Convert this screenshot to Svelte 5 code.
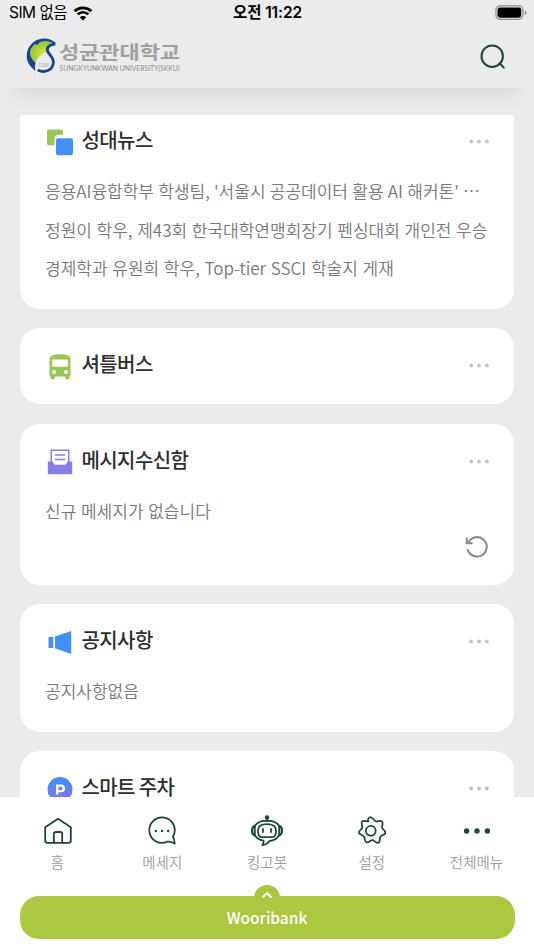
<script>
  const cards = [
    {
      id: 'news',
      title: '성대뉴스',
      lines: [
        "응용AI융합학부 학생팀, '서울시 공공데이터 활용 AI 해커톤' ⋯",
        '정원이 학우, 제43회 한국대학연맹회장기 펜싱대회 개인전 우승',
        '경제학과 유원희 학우, Top-tier SSCI 학술지 게재'
      ]
    },
    { id: 'bus', title: '셔틀버스', lines: [] },
    { id: 'inbox', title: '메시지수신함', lines: ['신규 메세지가 없습니다'], refresh: true },
    { id: 'notice', title: '공지사항', lines: ['공지사항없음'] },
    { id: 'parking', title: '스마트 주차', lines: [] }
  ]

  const tabs = [
    { id: 'home', label: '홈' },
    { id: 'message', label: '메세지' },
    { id: 'bot', label: '킹고봇' },
    { id: 'settings', label: '설정' },
    { id: 'more', label: '전체메뉴' }
  ]
</script>

<div class="app">
  <div class="status">
    <div class="carrier">
      <span>SIM 없음</span>
      <svg width="20" height="15" viewBox="0 0 20 15">
        <path d="M1.600 5.200a12.200 12.200 0 0 1 16.800 0M4.600 8.400a7.800 7.800 0 0 1 10.800 0" fill="none" stroke="#000" stroke-width="2.700" />
        <path d="M10 14.400 6.800 11.200a4.600 4.600 0 0 1 6.400 0z" />
      </svg>
    </div>
    <span class="time">오전 11:22</span>
    <svg class="battery" width="32" height="16" viewBox="0 0 32 16">
      <rect x=".9" y=".9" width="27" height="13.400" rx="4" fill="none" stroke="#8c8c8c" stroke-width="1.200" />
      <rect x="2.500" y="2.500" width="23.800" height="10.200" rx="2.400" />
      <path d="M29.700 5.200q1.800 .8 1.800 2.500t-1.800 2.500z" fill="#8c8c8c" />
    </svg>
  </div>

  <header>
    <svg class="logo" width="170" height="40" viewBox="0 0 170 40">
      <defs>
        <radialGradient id="leaf" gradientUnits="userSpaceOnUse" cx="72" cy="70" r="50">
          <stop offset="0" stop-color="#dde54a" />
          <stop offset=".5" stop-color="#b3d23a" />
          <stop offset="1" stop-color="#86bf3a" />
        </radialGradient>
      </defs>
      <g transform="scale(.3333) translate(-16 -16)">
        <path d="M110 35C84 10 40 18 25 53c-10 25 0 50 23 65-3-8-3-16 0-24-12-14-13-28-8-41 12-18 34-25 70-18z" fill="#17478b" />
        <path d="M33 53c4-8 9-13 15-17l5 6 5-9c15-7 28-6 40 1-13 5-19 14-16 28-16 3-27 14-34 30C33 82 28 67 33 53z" fill="url(#leaf)" />
        <path d="M107 37C86 39 78 50 86 63c7 10 17 17 15 32-3 20-25 31-47 20" fill="none" stroke="#17478b" stroke-width="8.500" />
        <text class="year" x="55" y="105" textLength="32" lengthAdjust="spacingAndGlyphs">1398</text>
      </g>
      <text class="name" x="34" y="21.500" textLength="121" lengthAdjust="spacingAndGlyphs">성균관대학교</text>
      <text class="latin" x="34.500" y="34" textLength="120" lengthAdjust="spacingAndGlyphs">SUNGKYUNKWAN UNIVERSITY(SKKU)</text>
    </svg>
    <svg class="search" width="26" height="26" viewBox="0 0 26 26">
      <circle cx="12.200" cy="12.200" r="10.700" />
      <path d="m19.500 19.300 4.300 4.300" />
    </svg>
  </header>

  <main>
    {#each cards as card}
      <section class="card {card.id}">
        <div class="head">
          <svg class="icon" width="28" height="28" viewBox="0 0 28 28">
            {#if card.id === 'news'}
              <path d="M3 1.500h12q2 0 2 2v3.200h-4.500q-4 0-4 4v6.500H3q-2 0-2-2V3.500q0-2 2-2z" fill="#98c556" />
              <rect x="10" y="10.300" width="17" height="17" rx="2.200" fill="#428ff5" />
            {:else if card.id === 'bus'}
              <path fill-rule="evenodd" fill="#98c556" d="M3.500 7q0-4.800 10.500-4.800T24.500 7v15.500q0 2-1.300 2.500v1.200q0 1-1 1h-2q-1 0-1-1v-1.700H8.800v1.700q0 1-1 1h-2q-1 0-1-1V25q-1.300-.5-1.300-2.500zM6.200 7.400v7.400h15.600V7.400zM8 18a2.100 2.100 0 1 0 0 4.200A2.100 2.100 0 0 0 8 18zM20 18a2.100 2.100 0 1 0 0 4.200 2.100 2.100 0 0 0 0-4.200z" />
            {:else if card.id === 'inbox'}
              <path d="M1.800 14.500h4.500l2.300 3.300h10.800l2.300-3.300h4.500v12.700H1.800z" fill="#857ee9" />
              <path d="M5.200 15.500V3.300h17.600v12.200M8.800 8.100h10.400M8.800 12.500h10.400" fill="none" stroke="#857ee9" stroke-width="1.500" />
            {:else if card.id === 'notice'}
              <path d="M2.500 9h4.800v11H2.500zM9 8.600l16.200-5.600v23L9 20.300z" fill="#428ff5" />
            {:else}
              <defs>
                <linearGradient id="park" x2="0" y2="1">
                  <stop stop-color="#378ff7" />
                  <stop offset="1" stop-color="#8c76e5" />
                </linearGradient>
              </defs>
              <circle cx="14" cy="14.500" r="12.500" fill="url(#park)" />
              <path d="M11.200 19.500v-8.800h4q2.600 0 2.600 2.700t-2.600 2.700h-4" fill="none" stroke="#fff" stroke-width="2.300" />
            {/if}
          </svg>
          <h2>{card.title}</h2>
          <svg class="dots" width="20" height="5" viewBox="0 0 20 5">
            <circle cx="2.200" cy="2.500" r="2" /><circle cx="10" cy="2.500" r="2" /><circle cx="17.800" cy="2.500" r="2" />
          </svg>
        </div>
        {#if card.lines.length}
          <ul>
            {#each card.lines as line}
              <li>{line}</li>
            {/each}
          </ul>
        {/if}
        {#if card.refresh}
          <svg class="refresh" width="24" height="24" viewBox="0 0 24 24">
            <path d="M2.600 14.200a9.700 9.700 0 1 0 1-7.200" />
            <path d="M1.800 2.500v5.700h5.800" />
          </svg>
        {/if}
      </section>
    {/each}
  </main>

  <footer>
    <nav>
      {#each tabs as tab}
        <div class="tab">
          <svg width="34" height="34" viewBox="0 0 34 34">
            {#if tab.id === 'home'}
              <path d="M4.200 13.200 17 4.800l12.800 8.400v13.300q0 2.300-2.300 2.300h-21q-2.300 0-2.300-2.300z" />
              <path d="M12.800 28.600V20q0-2 2-2h4.400q2 0 2 2v8.600" />
            {:else if tab.id === 'message'}
              <path d="M28 22.500a12.700 12.700 0 1 0-5.700 5.200q3.400-.4 7.400 1.800-.2-4.200-1.700-7z" />
              <g class="solid"><circle cx="10.800" cy="17" r="1.200" /><circle cx="17" cy="17" r="1.200" /><circle cx="23.200" cy="17" r="1.200" /></g>
            {:else if tab.id === 'bot'}
              <circle class="solid" cx="17" cy="3.500" r="2.200" />
              <path d="M17 4v3M4.800 12C7 8.500 11 6.700 17 6.700S27 8.500 29.200 12v9C27 25 23 26.700 19.500 27q-3 4-7.200 4 1.700-2 1.200-4.300C9.500 26 6.500 24 4.800 21z" />
              <path d="M4.500 12q-2.500 1-2.500 4.500t2.500 4.800M29.500 12q2.500 1 2.500 4.500t-2.500 4.800" stroke-width="2.200" />
              <path d="M8 16.500q0-6.300 9-6.300t9 6.300q0 6.700-3.500 6.700h-11Q8 23.200 8 16.500z" />
              <path d="M13 15v3M21 15v3" />
            {:else if tab.id === 'settings'}
              <path d="M16.800 3.300c2.400 0 3.300 3.900 5.500 4.300 2 .4 4.600-1.500 6.100.1 1.600 1.800-.6 4.400.1 6.400.6 1.900 3.600 2.600 3.100 4.900-.4 2.400-3.700 2-4.900 3.800-1.200 1.800.4 5-1.800 6-2.200 1-4.100-2-5.800-2.400-2.300-.5-4 2.800-6.400 2-2.200-.8-1.100-4.200-2.600-5.900-1.200-1.600-4.500-1.200-4.900-3.600-.3-2.200 2.700-3.100 3.200-5 .6-2.100-1.600-4.500.1-6.300 1.500-1.600 4.200.3 6.200 0C13.700 7.200 14.500 3.300 16.800 3.300z" transform="translate(-1.300 -.2)" />
              <circle cx="15.800" cy="16.800" r="4.900" />
            {:else}
              <g class="solid"><circle cx="6.600" cy="17" r="2.700" /><circle cx="17" cy="17" r="2.700" /><circle cx="27.400" cy="17" r="2.700" /></g>
            {/if}
          </svg>
          <span>{tab.label}</span>
        </div>
      {/each}
    </nav>
    <div class="bank">
      <div class="handle">
        <svg width="12" height="8" viewBox="0 0 12 8"><path d="m1.500 6.500 4.500-4.500 4.500 4.500" /></svg>
      </div>
      Wooribank
    </div>
  </footer>
</div>

<style>
  :global(body) {
    margin: 0;
  }
  .app {
    width: 534px;
    height: 950px;
    overflow: hidden;
    display: flex;
    flex-direction: column;
    background: #ebebeb;
    font-family: "Noto Sans CJK KR", sans-serif;
  }
  .status {
    height: 26px;
    padding: 0 7px 0 9px;
    display: grid;
    grid-template-columns: 1fr auto 1fr;
    align-items: center;
    flex-shrink: 0;
    font-family: Inter, "Noto Sans CJK KR", sans-serif;
    font-size: 15.5px;
    line-height: 22px;
    color: #000;
  }
  .carrier {
    display: flex;
    align-items: center;
    gap: 6px;
    letter-spacing: -0.5px;
  }
  .carrier span {
    margin-top: -1px;
  }
  .time {
    font-size: 15.5px;
    font-weight: 600;
    letter-spacing: -0.1px;
    margin: -1px 1px 0 0;
  }
  .battery {
    justify-self: end;
  }
  header {
    height: 62px;
    flex-shrink: 0;
    padding: 0 28px 0 25px;
    display: flex;
    align-items: center;
    justify-content: space-between;
    background: #ebebeb;
    box-shadow: 0 20px 22px -18px rgba(0, 0, 0, 0.14);
  }
  .year {
    font: 14px "Liberation Sans", sans-serif;
    fill: #aaa;
  }
  .name {
    font-size: 18.5px;
    font-weight: 700;
    fill: #a0a0a0;
  }
  .latin {
    font: 7px Lato, sans-serif;
    fill: #8c8c8c;
  }
  .search {
    fill: none;
    stroke: #1b4a2d;
    stroke-width: 2;
    stroke-linecap: round;
  }
  main {
    height: 682px;
    margin: 27px 20px 0 19.5px;
    border-radius: 3px 3px 0 0;
    overflow: hidden;
    flex-shrink: 0;
  }
  .card {
    box-sizing: border-box;
    margin-bottom: 19.5px;
    padding: 19px 26px 20px;
    background: #fff;
    border-radius: 20px;
    display: flex;
    flex-direction: column;
  }
  .news {
    height: 204.5px;
    margin-top: -11px;
    border-radius: 0 0 20px 20px;
  }
  .bus {
    height: 76px;
  }
  .inbox {
    height: 161px;
  }
  .notice {
    height: 127.5px;
  }
  .parking {
    height: 76px;
    margin-bottom: 0;
  }
  .head {
    height: 37px;
    display: flex;
    align-items: center;
    flex-shrink: 0;
  }
  h2 {
    flex: 1;
    margin: 0 0 3.5px 8px;
    font-size: 20px;
    font-weight: 500;
    line-height: 35px;
    letter-spacing: -0.6px;
    color: #2e2e2e;
  }
  .icon {
    flex-shrink: 0;
  }
  .dots {
    fill: #c4c4c4;
    margin-right: -1px;
  }
  ul {
    list-style: none;
    margin: 12px 0 0 -0.5px;
    padding: 0;
  }
  li {
    height: 38.5px;
    line-height: 38px;
    font-size: 17px;
    font-weight: 350;
    word-spacing: 0.9px;
    color: #787878;
    white-space: nowrap;
  }
  .news li:first-child {
    word-spacing: 0.5px;
  }
  .refresh {
    align-self: flex-end;
    margin: 5px -1px 0 0;
    fill: none;
    stroke: #888;
    stroke-width: 2;
  }
  footer {
    flex: 1;
    background: #fff;
    padding: 0 19.5px;
  }
  nav {
    display: flex;
    justify-content: space-between;
    margin: 0 -14px;
    padding-top: 17px;
    height: 81.5px;
  }
  .tab {
    width: 104px;
    display: flex;
    flex-direction: column;
    align-items: center;
  }
  .tab svg {
    fill: none;
    stroke: #1b4a2d;
    stroke-width: 1.8;
    stroke-linejoin: round;
    stroke-linecap: round;
  }
  .tab .solid {
    fill: #1b4a2d;
    stroke: none;
  }
  .tab span {
    font-size: 14.5px;
    font-weight: 350;
    line-height: 28px;
    color: #9c9c9c;
  }
  .bank {
    position: relative;
    height: 43.5px;
    border-radius: 19px;
    background: #abc840;
    color: #fff;
    font-size: 15.5px;
    font-weight: 500;
    line-height: 43px;
    text-align: center;
  }
  .handle {
    position: absolute;
    left: 50%;
    top: -10.5px;
    width: 26px;
    height: 20px;
    margin-left: -13px;
    border-radius: 13px 13px 0 0;
    background: #abc840;
    display: flex;
    align-items: center;
    justify-content: center;
  }
  .handle path {
    fill: none;
    stroke: #fff;
    stroke-width: 2;
  }
</style>
